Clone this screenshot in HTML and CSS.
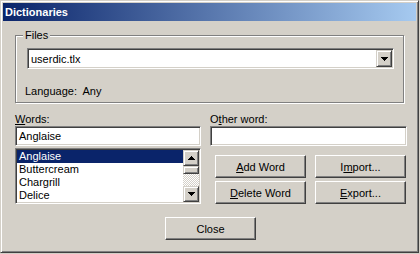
FILE: index.html
```html
<!DOCTYPE html>
<html lang="en">
<head>
  <meta charset="UTF-8">
  <meta name="viewport" content="width=device-width, initial-scale=1.0">
  <title>Dictionaries</title>
  <link rel="stylesheet" href="styles.css">
</head>
<body>
  <div class="window">
    <div class="titlebar">Dictionaries</div>
    <div class="content">

      <!-- Files group -->
      <div class="group">
        <span class="group-title">Files</span>
        <div class="combo">
          <span class="combo-text">userdic.tlx</span>
          <span class="drop-btn">
            <svg width="7" height="4" viewBox="0 0 7 4"><path d="M0 0h7v1H0zM1 1h5v1H1zM2 2h3v1H2zM3 3h1v1H3z"/></svg>
          </span>
        </div>
        <div class="language">Language:&nbsp; Any</div>
      </div>

      <div class="words">
        <div class="col">
          <label class="caption"><u>W</u>ords:</label>
          <div class="field">Anglaise</div>
          <div class="listbox">
            <ul class="items">
              <li class="selected">Anglaise</li>
              <li>Buttercream</li>
              <li>Chargrill</li>
              <li>Delice</li>
            </ul>
            <div class="scrollbar">
              <span class="sb-btn">
                <svg width="7" height="4" viewBox="0 0 7 4"><path d="M3 0h1v1H3zM2 1h3v1H2zM1 2h5v1H1zM0 3h7v1H0z"/></svg>
              </span>
              <span class="sb-thumb"></span>
              <span class="sb-track"></span>
              <span class="sb-btn">
                <svg width="7" height="4" viewBox="0 0 7 4"><path d="M0 0h7v1H0zM1 1h5v1H1zM2 2h3v1H2zM3 3h1v1H3z"/></svg>
              </span>
            </div>
          </div>
        </div>

        <div class="col">
          <label class="caption">O<u>t</u>her word:</label>
          <div class="field"></div>
          <div class="buttons">
            <button type="button"><u>A</u>dd Word</button>
            <button type="button">I<u>m</u>port...</button>
            <button type="button"><u>D</u>elete Word</button>
            <button type="button"><u>E</u>xport...</button>
          </div>
        </div>
      </div>

      <div class="footer">
        <button type="button">Close</button>
      </div>
    </div>
  </div>
</body>
</html>
```

FILE: styles.css
```css
body {
  margin: 0;
  background-color: #d4d0c8;
  font-family: "Liberation Sans", Arial, sans-serif;
  font-size: 11px;
  color: #000;
}
.window {
  width: 419px;
  height: 253px;
  box-sizing: border-box;
  padding: 2px;
  background-color: #d4d0c8;
  border-top: 1px solid #d4d0c8;
  border-left: 1px solid #d4d0c8;
  border-right: 1px solid #404040;
  border-bottom: 1px solid #404040;
  box-shadow: inset 1px 1px #fff, inset -1px -1px #808080;
}
.titlebar {
  height: 18px;
  line-height: 18px;
  padding-left: 2px;
  color: #fff;
  font-weight: bold;
  background: linear-gradient(to right, #0a246a, #a6caf0);
}
.content {
  padding: 0 0 0 12px;
}

/* group box */
.group {
  position: relative;
  width: 389px;
  height: 68px;
  box-sizing: border-box;
  margin-top: 14px;
  padding: 12px 0 0 9px;
  border: 1px solid #808080;
  box-shadow: inset 1px 1px #fff, 1px 1px #fff;
}
.group-title {
  position: absolute;
  top: -7px;
  left: 7px;
  padding: 0 2px;
  line-height: 13px;
  background-color: #d4d0c8;
}
.combo {
  display: flex;
  align-items: center;
  width: 367px;
  height: 21px;
  box-sizing: border-box;
  margin-left: 2px;
  background-color: #fff;
  border: 1px solid;
  border-color: #808080 #fff #fff #808080;
  box-shadow: inset 1px 1px #404040, inset -1px -1px #d4d0c8;
  padding: 1px;
}
.combo-text {
  flex: 1;
  padding-left: 2px;
}
.drop-btn,
.sb-btn {
  display: flex;
  align-items: center;
  justify-content: center;
  width: 16px;
  height: 17px;
  box-sizing: border-box;
  background-color: #d4d0c8;
  border: 1px solid;
  border-color: #d4d0c8 #404040 #404040 #d4d0c8;
  box-shadow: inset 1px 1px #fff, inset -1px -1px #808080;
}
.language {
  margin-top: 16px;
  line-height: 13px;
}

/* words area */
.words {
  display: grid;
  grid-template-columns: 186px 197px;
  column-gap: 9px;
  margin-top: 10px;
}
.caption {
  display: block;
  height: 13px;
  line-height: 13px;
}
.field {
  height: 20px;
  box-sizing: border-box;
  padding: 2px 3px;
  line-height: 15px;
  background-color: #fff;
  border: 1px solid;
  border-color: #808080 #fff #fff #808080;
  box-shadow: inset 1px 1px #404040, inset -1px -1px #d4d0c8;
}
.listbox {
  display: flex;
  height: 56px;
  box-sizing: border-box;
  margin-top: 2px;
  padding: 1px;
  background-color: #fff;
  border: 1px solid;
  border-color: #808080 #fff #fff #808080;
  box-shadow: inset 1px 1px #404040, inset -1px -1px #d4d0c8;
}
.items {
  flex: 1;
  margin: 0;
  padding: 0;
  list-style: none;
}
.items li {
  height: 13px;
  line-height: 13px;
  padding-left: 2px;
}
.items li.selected {
  background-color: #0a246a;
  color: #fff;
}
.scrollbar {
  display: flex;
  flex-direction: column;
  width: 16px;
}
.sb-btn {
  height: 16px;
}
.sb-thumb {
  height: 8px;
  box-sizing: border-box;
  background-color: #d4d0c8;
  border: 1px solid;
  border-color: #d4d0c8 #404040 #404040 #d4d0c8;
  box-shadow: inset 1px 1px #fff, inset -1px -1px #808080;
}
.sb-track {
  flex: 1;
  background: repeating-conic-gradient(#fff 0 25%, #d4d0c8 0 50%) 0 0 / 2px 2px;
}

/* buttons */
.buttons {
  display: grid;
  grid-template-columns: 91px 91px;
  column-gap: 9px;
  row-gap: 3px;
  margin: 9px 0 0 5px;
}
button {
  width: 91px;
  height: 23px;
  padding: 0;
  font-family: inherit;
  font-size: 11px;
  color: #000;
  background-color: #d4d0c8;
  border: 1px solid;
  border-color: #fff #404040 #404040 #fff;
  box-shadow: inset -1px -1px #808080;
}
.footer {
  display: flex;
  justify-content: center;
  margin-top: 13px;
  padding-right: 10px;
}
```
